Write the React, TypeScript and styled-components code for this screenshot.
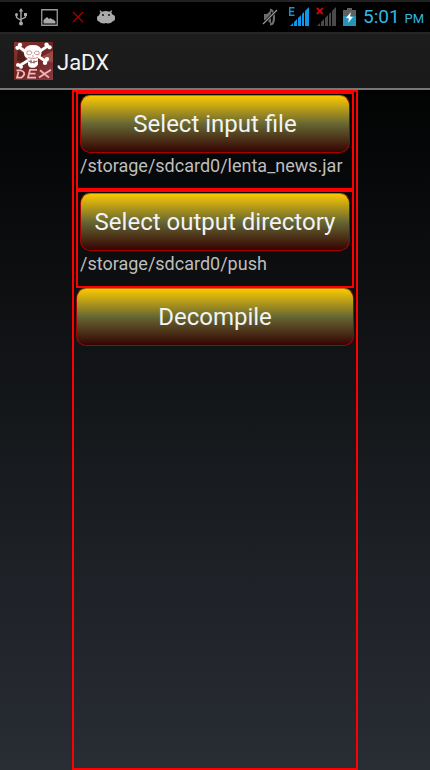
import React from "react";
import styled, { createGlobalStyle } from "styled-components";

const GlobalStyle = createGlobalStyle`
  *, *::before, *::after { box-sizing: border-box; }
  html, body { margin: 0; background: #000; }
  body, button { font-family: Roboto, "Noto Sans", sans-serif; }
`;

const Screen = styled.div`
  min-height: 100vh;
  display: flex;
  flex-direction: column;
  background: #000;
`;

const StatusBar = styled.header`
  height: 32px;
  padding: 0 6px 0 14px;
  display: flex;
  align-items: center;
  justify-content: space-between;
  border-top: 2px solid #222;
`;

const StatusGroup = styled.div<{ $gap: number }>`
  display: flex;
  align-items: center;
  gap: ${(p) => p.$gap}px;

  svg { display: block; }
`;

const Clock = styled.time`
  color: #33b5e5;
  font-size: 19px;
  line-height: 24px;
  padding-top: 2px;
`;

const Meridiem = styled.span`
  font-size: 13px;
`;

const ActionBar = styled.div`
  height: 58px;
  padding: 0 14px;
  display: flex;
  align-items: center;
  gap: 4px;
  background: linear-gradient(#1d1d1d, #191919);
  border-top: 2px solid #262626;
  border-bottom: 2px solid #777;
`;

const Title = styled.h1`
  margin: 0;
  padding-top: 4px;
  color: #f3f3f3;
  font-size: 22px;
  line-height: 28px;
  font-weight: 400;
`;

const Content = styled.main`
  flex: 1;
  display: flex;
  justify-content: center;
  background: linear-gradient(#020303, #292d34);
`;

const Panel = styled.section`
  min-width: 286px;
  display: flex;
  flex-direction: column;
  padding: 0 2px;
  border: 2px solid #f00;
`;

const Picker = styled.div`
  height: 98px;
  padding: 1px 2px;
  border: 2px solid #f00;
`;

const Button = styled.button`
  display: block;
  width: 100%;
  height: 58px;
  padding: 0 12px;
  border: 1px solid #a80000;
  border-top-color: #d07000;
  border-radius: 10px;
  background: linear-gradient(#ffcc00, #666633 50%, #330000) border-box;
  color: #f3f3f3;
  font-size: 24px;
  line-height: 32px;
  cursor: pointer;
`;

const Path = styled.output`
  display: block;
  color: #bebebe;
  font-size: 18px;
  line-height: 26px;
  white-space: nowrap;
`;

const UsbIcon = () => (
  <svg width="14" height="18" viewBox="0 0 14 18" fill="none" stroke="#aaa" strokeWidth="1.4" aria-label="USB connected">
    <path d="M7 3v12M2.500 7v2.500L7 12.500M11.500 7v2L7 11.500" />
    <path d="M7 0 9.200 3.500H4.800z" fill="#aaa" stroke="none" />
    <circle cx="2.500" cy="6.500" r="1.500" fill="#aaa" stroke="none" />
    <path d="M10 5h3v3h-3z" fill="#aaa" stroke="none" />
    <circle cx="7" cy="15.500" r="2" fill="#aaa" stroke="none" />
  </svg>
);

const PictureIcon = () => (
  <svg width="17" height="17" viewBox="0 0 17 17" aria-label="Screenshot saved">
    <path d="M.75.75h15.500v15.500H.75z" fill="none" stroke="#999" strokeWidth="1.300" />
    <path d="M2.500 14.500v-3.500l3.500-3 2 2 1.500-1 2 1.500 1 0 2 2v2z" fill="#aaa" />
  </svg>
);

const CrossIcon = () => (
  <svg width="13" height="12" viewBox="0 0 13 12" aria-label="Error">
    <path d="m2 1 10 10M12 1 2 11" stroke="#a80000" strokeWidth="1.300" />
  </svg>
);

const DebugIcon = () => (
  <svg width="18" height="14" viewBox="0 0 18 14" aria-label="Debugging enabled">
    <path d="M3.200.3 5 1.700Q9 .5 12.500 1.700L14.500.3l.7.700-1 1.700q1.500 1.300 1.600 2.300 2-.3 2.200 1.700V9q0 2-2.200 2.200Q14 13.700 10.500 13.500L9 13l-1.800.5Q3.500 13.600 2 11.600 0 11 0 9V7.500q.2-2 2-2 .3-1.800 1.500-2.800L2.500 1z" fill="#aaa" />
    <circle cx="6" cy="5" r="1" fill="#111" />
    <circle cx="12" cy="5" r="1" fill="#111" />
  </svg>
);

const MuteIcon = () => (
  <svg width="20" height="18" viewBox="0 0 20 18" aria-label="Vibrate off">
    <path d="M2 6h3l4-4v14l-4-4H2z" fill="#6c6c6c" />
    <path d="M8 1.500q4 1 4 8T8 16.500" stroke="#707070" strokeWidth="2.200" fill="none" />
    <path d="M1 16 15 2" stroke="#000" strokeWidth="2.600" />
    <path d="M1 16 15 2" stroke="#999" strokeWidth="1.300" />
  </svg>
);

const SignalIcon = ({ active }: { active: boolean }) => (
  <svg width="20" height="20" viewBox="0 0 20 20" aria-label={active ? "Mobile signal" : "No signal"}>
    <g fill={active ? "#0d98ee" : "#4a4a4a"}>
      <path d="M1 19 4 16v3zM5 15l3-3v7H5zM9 11l3-3v11H9zM13 7l2-2v14h-2zM16 4l4-4v19h-4z" />
    </g>
    {active ? (
      <path d="M5.500.75H.75v7.500H5.500M.75 4.500H5" fill="none" stroke="#1a8fd0" strokeWidth="1.500" />
    ) : (
      <path d="m.8 1 6 6M6.800 1l-6 6" stroke="#c80808" strokeWidth="1.800" />
    )}
  </svg>
);

const BatteryIcon = () => (
  <svg width="13" height="18" viewBox="0 0 13 18" aria-label="Battery charging">
    <path d="M4 0h5v2h4v6H0V2h4z" fill="#606060" />
    <path d="M0 8h13v10H0z" fill="#2992b8" />
    <path d="M8 4 3 10l3 .5-1 4.500 5-6-3-.5z" fill="#fff" />
  </svg>
);

const AppLogo = () => (
  <svg width="39" height="38" viewBox="0 0 39 39" preserveAspectRatio="none" aria-label="DEX">
    <defs>
      <linearGradient id="logo" x2="1" y2="1">
        <stop stopColor="#873530" />
        <stop offset=".5" stopColor="#702522" />
        <stop offset="1" stopColor="#8c3844" />
      </linearGradient>
    </defs>
    <path d="M0 0h39v39H0z" fill="url(#logo)" />
    <path d="M4 8 11 13 12 22 3 19z" fill="#4f1c17" />
    <path d="M28 15l11-6v12l-7-1z" fill="#9b4b43" />
    <g stroke="#fff" strokeWidth="3" strokeLinecap="round">
      <path d="M5 5 13 11M34 4 25 10M26 16l6 4M14 19 6 24" />
    </g>
    <g fill="#fff">
      <circle cx="3.500" cy="6" r="2.200" /><circle cx="6" cy="3" r="2.200" />
      <circle cx="32.500" cy="2.800" r="2.200" /><circle cx="35.500" cy="5.500" r="2.200" />
      <circle cx="33" cy="17.500" r="2.200" /><circle cx="31" cy="21.500" r="2.200" />
      <circle cx="4" cy="23.500" r="2" /><circle cx="7" cy="25.500" r="2" />
      <path d="M10 9q1-6 9-6 8 0 8.500 6 .500 6-3.500 8l0 6q-2 3.500-5 3.500-4 0-5-3l0-6Q9 15 10 9z" />
    </g>
    <g fill="none" stroke="#c98a86" strokeWidth=".9">
      <path d="M13 9.500q3-1.500 5 1-1 4-5 2zM20 11q2-3 5-1v3q-4 1-5-2zM19 13v3M14 16q5 2 10 0" />
      <path d="M14.500 19.500q4 3 9 0M17 18v4M20 19v3" stroke="#74403c" />
    </g>
    <g fill="none" stroke="#f0b8bb" strokeWidth="1.800">
      <path d="M2.500 29h4q7 2.500 1 7.500H3l1.500-6M23 28.500h-7l-2 8h8M15.500 32.500h6M26 29l9 7.500M37 28.500l-12 8" />
    </g>
  </svg>
);

const files = [
  { id: "input", action: "Select input file", path: "/storage/sdcard0/lenta_news.jar" },
  { id: "output", action: "Select output directory", path: "/storage/sdcard0/push" },
];

export default function App() {
  return (
    <Screen>
      <GlobalStyle />
      <StatusBar>
        <StatusGroup $gap={13}>
          <UsbIcon />
          <PictureIcon />
          <CrossIcon />
          <DebugIcon />
        </StatusGroup>
        <StatusGroup $gap={7}>
          <MuteIcon />
          <SignalIcon active />
          <SignalIcon active={false} />
          <BatteryIcon />
          <Clock>5:01 <Meridiem>PM</Meridiem></Clock>
        </StatusGroup>
      </StatusBar>
      <ActionBar>
        <AppLogo />
        <Title>JaDX</Title>
      </ActionBar>
      <Content>
        <Panel>
          {files.map((f) => (
            <Picker key={f.id}>
              <Button id={f.id} type="button">{f.action}</Button>
              <Path htmlFor={f.id}>{f.path}</Path>
            </Picker>
          ))}
          <Button type="button">Decompile</Button>
        </Panel>
      </Content>
    </Screen>
  );
}
